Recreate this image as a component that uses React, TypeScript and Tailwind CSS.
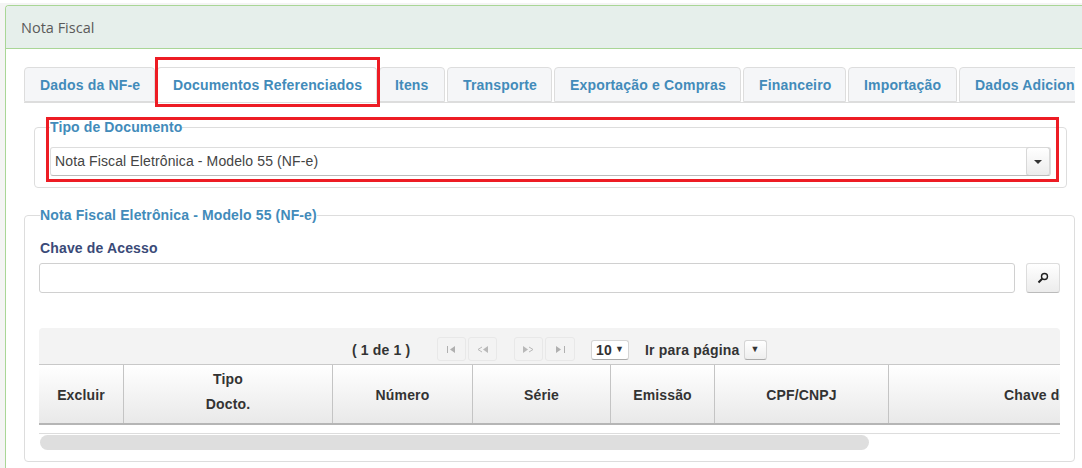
const sans = "font-['Liberation_Sans',Arial,sans-serif]";

function Tab({ label, active, className }: { label: string; active?: boolean; className: string }) {
  return (
    <div
      className={`flex h-[35px] shrink-0 items-center rounded-t-[4px] border border-[#dddddd] pl-[15px] pt-[2px] text-[14px] font-bold tracking-[0.17px] text-[#428bba] ${active ? "border-b-white bg-white" : "bg-[#f5f6f8]"} ${className}`}
    >
      {label}
    </div>
  );
}

function PageButton({ children, className = "" }: { children: React.ReactNode; className?: string }) {
  return (
    <div className={`-mt-[2px] flex h-[24px] w-[29px] items-center justify-center rounded-[3px] border border-[#e8e8e8] bg-[#f3f3f3] ${className}`}>
      {children}
    </div>
  );
}

function Th({ className, children }: { className: string; children: React.ReactNode }) {
  return (
    <div className={`flex h-full shrink-0 items-center justify-center border-r border-[#c4c4c4] pt-[2px] text-center text-[14px] font-bold leading-[25px] tracking-[0.15px] text-[#333333] ${className}`}>
      {children}
    </div>
  );
}

export default function App() {
  return (
    <div className={`h-[468px] w-[1082px] overflow-hidden bg-white pt-[3px] ${sans}`}>
      <div className="relative h-[465px] bg-[#f4f4f4] pl-[5px] pt-[2px]">
        <div className="flex h-[463px] flex-col overflow-hidden rounded-tl-[4px] border-l border-t border-[#a9d696] bg-white">
          <div className="flex h-[43px] shrink-0 items-center border-b border-[#a9d696] bg-[#e6efeb] pl-[15px] pt-[2px] font-['Open_Sans',sans-serif] text-[14.5px] text-[#5a5a5a]">
            Nota Fiscal
          </div>
          <div className="w-[1051px] pl-[18px] pt-[18px]">
            <div className="flex h-[36px] w-[1051px] gap-[2px] overflow-hidden border-b border-[#dddddd]">
              <Tab label="Dados da NF-e" className="w-[131px]" />
              <Tab active label="Documentos Referenciados" className="w-[220px]" />
              <Tab label="Itens" className="w-[66px]" />
              <Tab label="Transporte" className="w-[105px]" />
              <Tab label="Exportação e Compras" className="w-[187px]" />
              <Tab label="Financeiro" className="w-[103px]" />
              <Tab label="Importação" className="w-[109px]" />
              <Tab label="Dados Adicionais" className="w-[140px]" />
            </div>

            <fieldset className="ml-[10px] mt-[16px] h-[69px] w-[1031px] rounded-[4px] border border-[#dddddd] px-[15px]">
              <legend className="text-[14px] font-bold leading-[16px] tracking-[0.12px] text-[#428bba]">Tipo de Documento</legend>
              <div className="mt-[12px] flex h-[29px] w-[1001px] items-center justify-between rounded-[3px] border border-[#dddddd] border-b-[#bbbbbb] bg-white">
                <span className="pl-[4px] text-[14px] tracking-[0.12px] text-[#444444]">Nota Fiscal Eletrônica - Modelo 55 (NF-e)</span>
                <div className="flex h-[29px] w-[24px] items-center justify-center rounded-[3px] border border-[#d8d8d8] border-b-[#bbbbbb] bg-gradient-to-b from-white to-[#ececec]">
                  <div className="h-0 w-0 border-x-[4px] border-t-[4px] border-x-transparent border-t-[#333333]" />
                </div>
              </div>
            </fieldset>

            <fieldset className="mt-[19px] h-[255px] w-[1051px] rounded-[4px] border border-[#dddddd] pl-[14px]">
              <legend className="ml-[1px] text-[14px] font-bold leading-[16px] tracking-[0.13px] text-[#428bba]">Nota Fiscal Eletrônica - Modelo 55 (NF-e)</legend>
              <div className="ml-[1px] mt-[17px] text-[14px] font-bold leading-[16px] tracking-[0.15px] text-[#3a4a78]">Chave de Acesso</div>
              <div className="mt-[7px] flex items-start gap-[11px]">
                <div className="h-[30px] w-[976px] rounded-[3px] border border-[#d0d0d0] bg-white" />
                <div className="flex h-[30px] w-[34px] items-center justify-center rounded-[3px] border border-[#dddddd] border-b-[#bbbbbb] bg-gradient-to-b from-white to-[#ececec]">
                  <svg width="12" height="12" viewBox="0 0 12 12">
                    <circle cx="7.5" cy="4.5" r="3" fill="none" stroke="#222" strokeWidth="1.4" />
                    <path d="M5.2 6.8 L1.5 10.5" stroke="#222" strokeWidth="2" />
                  </svg>
                </div>
              </div>

              <div className="mt-[35px] w-[1021px] overflow-hidden">
                <div className="flex h-[37px] items-center rounded-t-[4px] border-b border-[#c8c8c8] bg-[#f3f3f3] pl-[313px] pt-[8px] text-[14px] font-bold tracking-[0.15px] text-[#333333]">
                  <span className="w-[85px]">( 1 de 1 )</span>
                  <PageButton>
                    <svg width="9" height="7" viewBox="0 0 9 7"><path d="M0 0h1v7H0zM8 0v7L3 3.5z" fill="#b0b0b0" /></svg>
                  </PageButton>
                  <PageButton className="ml-[2px]">
                    <svg width="11" height="7" viewBox="0 0 11 7"><path d="M5 1 L1 3.5 L5 6" fill="none" stroke="#b8b8b8" /><path d="M11 0v7L6 3.5z" fill="#b8b8b8" /></svg>
                  </PageButton>
                  <PageButton className="ml-[17px]">
                    <svg width="11" height="7" viewBox="0 0 11 7"><path d="M0 0v7l5-3.5z" fill="#b8b8b8" /><path d="M6 1 L10 3.5 L6 6" fill="none" stroke="#b8b8b8" /></svg>
                  </PageButton>
                  <PageButton className="ml-[2px] w-[30px]">
                    <svg width="9" height="7" viewBox="0 0 9 7"><path d="M0 0v7l5-3.5zM8 0h1v7H8z" fill="#b0b0b0" /></svg>
                  </PageButton>
                  <div className="ml-[16px] flex h-[20px] w-[38px] items-center justify-between rounded-[3px] border border-[#d5d5d5] border-b-[#aaaaaa] bg-white px-[4px]">
                    10 <span className="text-[9px] text-[#333333]">▼</span>
                  </div>
                  <span className="ml-[16px] tracking-[0.2px]">Ir para página</span>
                  <div className="ml-[4px] flex h-[20px] w-[23px] items-center justify-center rounded-[3px] border border-[#d5d5d5] border-b-[#aaaaaa] bg-gradient-to-b from-white to-[#eeeeee]">
                    <span className="text-[9px] text-[#333333]">▼</span>
                  </div>
                </div>
                <div className="flex h-[60px] border-b-2 border-[#b5b5b5] bg-gradient-to-b from-white to-[#e9e9e9]">
                  <Th className="w-[85px]">Excluir</Th>
                  <Th className="w-[209px]"><span className="-mt-[6px]">Tipo<br />Docto.</span></Th>
                  <Th className="w-[140px]">Número</Th>
                  <Th className="w-[138px]">Série</Th>
                  <Th className="w-[104px]">Emissão</Th>
                  <Th className="w-[174px]">CPF/CNPJ</Th>
                  <div className="flex h-full min-w-0 flex-1 items-center overflow-hidden whitespace-nowrap pl-[115px] pt-[2px] text-[14px] font-bold tracking-[0.15px] text-[#333333]">
                    Chave de Acesso
                  </div>
                </div>
                <div className="h-[9px] border-b border-[#dddddd]" />
                <div className="ml-[1px] mt-[1px] h-[15px] w-[829px] rounded-full bg-[#dedede]" />
              </div>
            </fieldset>
          </div>
        </div>

        <div className="pointer-events-none absolute left-[155px] top-[54px] h-[50px] w-[225px] border-[3px] border-[#ed1c24]" />
        <div className="pointer-events-none absolute left-[46px] top-[114px] h-[65px] w-[1013px] border-[3px] border-[#ed1c24]" />
      </div>
    </div>
  );
}
